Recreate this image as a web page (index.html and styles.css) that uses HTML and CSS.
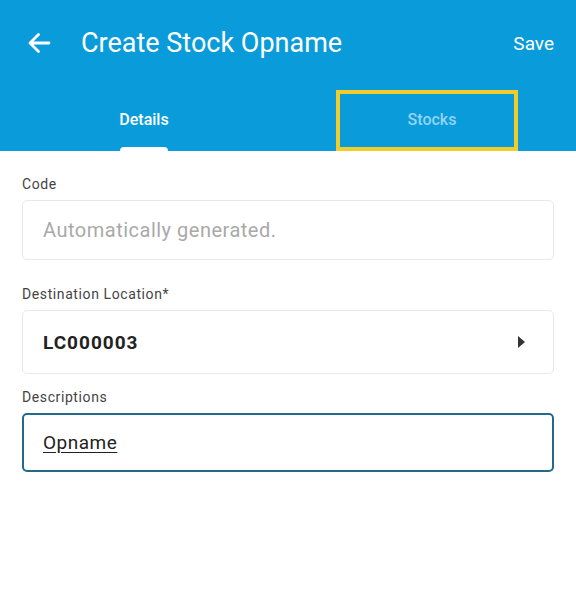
FILE: index.html
```html
<!DOCTYPE html>
<html lang="en">
<head>
  <meta charset="UTF-8" />
  <meta name="viewport" content="width=device-width, initial-scale=1.0"/>
  <title>Create Stock Opname</title>
  <link rel="stylesheet" href="styles.css">
</head>
<body>
  <div class="appbar">
    <div class="toolbar">
      <svg class="back" width="24" height="22" viewBox="0 0 24 22">
        <path d="M22 11H3.5M11.5 2.5L3 11l8.5 8.5" fill="none" stroke="#fff" stroke-width="2.8" stroke-linecap="round" stroke-linejoin="round"/>
      </svg>
      <div class="titulo">Create Stock Opname</div>
      <div class="guardar">Save</div>
    </div>
    <div class="tabs">
      <div class="tab activo">Details</div>
      <div class="tab">Stocks<span class="resaltado"></span></div>
    </div>
  </div>

  <div class="contenido">
    <label class="etiqueta">Code</label>
    <div class="campo campo-code"><span class="placeholder">Automatically generated.</span></div>

    <label class="etiqueta etiqueta-dest">Destination Location*</label>
    <div class="campo campo-dest">
      <span class="valor">LC000003</span>
      <span class="flecha"></span>
    </div>

    <label class="etiqueta etiqueta-desc">Descriptions</label>
    <div class="campo campo-desc"><span class="texto">Opname</span></div>
  </div>
</body>
</html>
```

FILE: styles.css
```css
body {
  margin: 0;
  font-family: Roboto, "Noto Sans", sans-serif;
  background-color: #fff;
}
.appbar {
  background-color: #0a9bdb;
  color: #fff;
}
.toolbar {
  height: 86px;
  display: flex;
  align-items: center;
  padding: 0 22px 0 27px;
}
.back {
  display: block;
}
.titulo {
  margin-left: 30px;
  font-size: 27px;
  flex: 1;
}
.guardar {
  font-size: 19px;
}
.tabs {
  display: flex;
  height: 65px;
}
.tab {
  flex: 1;
  position: relative;
  display: flex;
  align-items: center;
  justify-content: center;
  padding-top: 1px;
  font-size: 16px;
  font-weight: 500;
  color: #93d4f2;
}
.tab.activo {
  color: #fff;
}
.tab.activo::after {
  content: "";
  position: absolute;
  bottom: 0;
  left: 120px;
  width: 48px;
  height: 4px;
  background: #fff;
  border-radius: 4px 4px 0 0;
}
.resaltado {
  position: absolute;
  left: 48px;
  top: 4px;
  width: 174px;
  height: 53px;
  border: 4px solid #f1cd2c;
}
.contenido {
  padding: 23px 22px 0;
}
.etiqueta {
  display: block;
  font-size: 14px;
  line-height: 20px;
  letter-spacing: 0.6px;
  color: #444;
  margin-bottom: 6px;
}
.etiqueta-dest {
  margin-top: 24px;
}
.etiqueta-desc {
  margin-top: 13px;
}
.campo {
  display: flex;
  align-items: center;
  box-sizing: border-box;
  padding: 0 20px;
  border: 1px solid #e8e8e8;
  border-radius: 5px;
  font-size: 19px;
  letter-spacing: 0.5px;
}
.campo-code {
  height: 60px;
}
.placeholder {
  font-size: 20px;
  color: #a9a9a9;
}
.campo-dest {
  height: 64px;
  justify-content: space-between;
  padding-right: 28px;
}
.valor {
  font-weight: bold;
  letter-spacing: 1px;
  color: #222;
}
.flecha {
  width: 0;
  height: 0;
  border-top: 6px solid transparent;
  border-bottom: 6px solid transparent;
  border-left: 7px solid #333;
}
.campo-desc {
  height: 59px;
  border: 2px solid #22698a;
  padding-left: 19px;
}
.texto {
  color: #222;
  text-decoration: underline;
  text-underline-offset: 3px;
}
```
